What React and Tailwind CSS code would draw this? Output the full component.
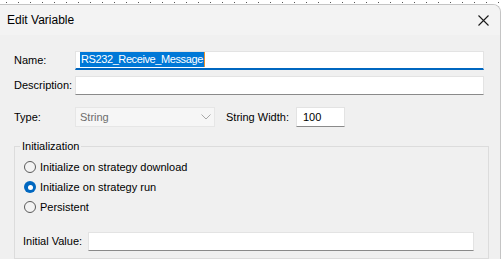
import { useState } from 'react'

// ── Small win32-style pieces ────────────────────────────────────────────────
function Radio({ checked, label, onClick }) {
  return (
    <div className="flex items-center h-[20px] cursor-default" onClick={onClick}>
      {checked ? (
        <span className="w-[12px] h-[12px] rounded-full bg-[#0067c0] flex items-center justify-center">
          <span className="w-[5px] h-[5px] rounded-full bg-white" />
        </span>
      ) : (
        <span className="w-[12px] h-[12px] rounded-full border border-[#5a5a5a] bg-[#f3f3f3]" />
      )}
      <span className="ml-[4px]">{label}</span>
    </div>
  )
}

function TextBox({ className = '', children }) {
  return (
    <div className={`bg-white border border-[#e3e3e3] border-b-[#8a8a8a] flex items-center ${className}`}>
      {children}
    </div>
  )
}

export default function App() {
  const [init, setInit] = useState('run')
  const dots = Array.from({ length: 42 })

  return (
    <div
      className="w-[502px] h-[259px] bg-white overflow-hidden text-[11px] text-black leading-none"
      style={{ fontFamily: '"Liberation Sans", Arial, sans-serif' }}
    >
      {/* dotted guide line */}
      <div className="h-[4px] flex items-end pl-[6px] gap-[11px]">
        {dots.map((_, i) => (
          <span key={i} className="w-[1px] h-[1px] bg-[#555] mb-[1px] shrink-0" />
        ))}
      </div>

      {/* ── Dialog ── */}
      <div className="w-[501px] h-[260px] border-t border-r border-[#c4c4c4] rounded-tr-[8px] overflow-hidden bg-[#f0f0f0]">
        {/* Title bar */}
        <div className="h-[30px] bg-[#f3f3f3] flex items-center justify-between pl-[7px] pr-[10px]">
          <span className="text-[12px]">Edit Variable</span>
          <svg width="11" height="11" viewBox="0 0 11 11" className="mr-[1px]">
            <path d="M0.5 0.5L10.5 10.5M10.5 0.5L0.5 10.5" stroke="#1a1a1a" strokeWidth="1.1" />
          </svg>
        </div>

        {/* Body */}
        <div className="pl-[14px] pt-[15px]">
          {/* Name */}
          <div className="flex items-center h-[20px]">
            <span className="w-[61px]">Name:</span>
            <div className="w-[409px] h-[19px] bg-white border border-[#e3e3e3] border-b-2 border-b-[#0067c0] flex items-center pl-[4px]">
              <span className="bg-[#0078d7] text-white h-[15px] flex items-center px-[1px] tracking-[-0.4px]">RS232_Receive_Message</span>
              <span className="w-[1px] h-[15px] bg-[#e8912d]" />
            </div>
          </div>

          {/* Description */}
          <div className="flex items-center h-[20px] mt-[5px]">
            <span className="w-[61px]">Description:</span>
            <TextBox className="w-[409px] h-[19px]" />
          </div>

          {/* Type / String width */}
          <div className="flex items-center h-[20px] mt-[12px]">
            <span className="w-[61px]">Type:</span>
            <div className="w-[140px] h-[20px] bg-[#f6f6f6] border border-[#e6e6e6] flex items-center justify-between pl-[4px] pr-[3px] text-[#6d6d6d]">
              <span>String</span>
              <svg width="10" height="6" viewBox="0 0 10 6">
                <path d="M0.5 0.5L5 5L9.5 0.5" fill="none" stroke="#a8a8a8" strokeWidth="1" />
              </svg>
            </div>
            <span className="ml-[11px] w-[70px]">String Width:</span>
            <TextBox className="w-[49px] h-[20px] pl-[6px]">100</TextBox>
          </div>

          {/* Initialization group */}
          <fieldset className="w-[475px] mt-[12px] border border-[#dcdcdc] pl-[9px] pr-[14px] pb-[7px]">
            <legend className="ml-[-4px] px-[2px] leading-[14px]">Initialization</legend>
            <div className="pt-[4px]">
              <Radio label="Initialize on strategy download" checked={init === 'download'} onClick={() => setInit('download')} />
              <Radio label="Initialize on strategy run" checked={init === 'run'} onClick={() => setInit('run')} />
              <Radio label="Persistent" checked={init === 'persist'} onClick={() => setInit('persist')} />
            </div>
            <div className="flex items-center h-[19px] mt-[15px] -ml-[1px]">
              <span className="w-[65px]">Initial Value:</span>
              <TextBox className="flex-1 h-[19px]" />
            </div>
          </fieldset>
        </div>
      </div>
    </div>
  )
}
